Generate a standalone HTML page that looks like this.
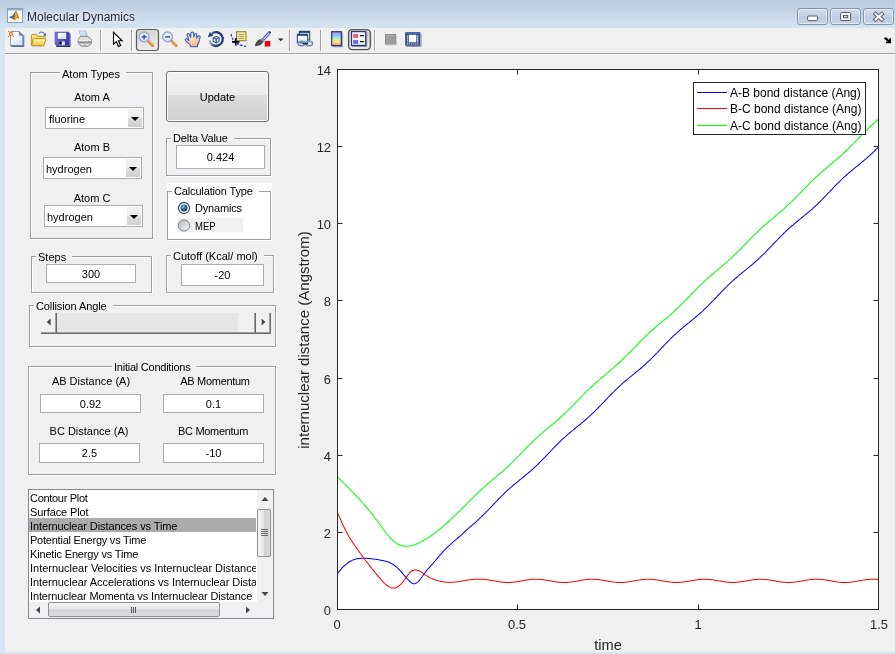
<!DOCTYPE html>
<html>
<head>
<meta charset="utf-8">
<title>Molecular Dynamics</title>
<style>
html,body{margin:0;padding:0;}
body{width:895px;height:654px;overflow:hidden;background:#f0f0f0;position:relative;
 font-family:"Liberation Sans",sans-serif;font-size:11px;color:#000;}
.abs{position:absolute;}
#frame{position:absolute;left:0;top:0;width:895px;height:654px;background:#d9e5f3;}
#titlebar{position:absolute;left:0;top:0;width:895px;height:28px;
 background:linear-gradient(to bottom,#bacbde 0%,#c4d4e6 40%,#d6e4f2 100%);}
#title{position:absolute;left:27px;top:9px;font-size:12px;line-height:16px;color:#26263c;letter-spacing:0;text-shadow:0 0 5px rgba(255,255,255,.9),0 0 8px rgba(255,255,255,.7);}
#client{position:absolute;left:5px;top:28px;width:890px;height:624px;background:#f0f0f0;}
#tbline{position:absolute;left:5px;top:53px;width:890px;height:1px;background:#a0a0a0;}
#tbline2{position:absolute;left:5px;top:54px;width:890px;height:1px;background:#fff;}
.wbtn{position:absolute;top:8px;width:29px;height:15px;border:1px solid #8593ad;border-radius:3px;
 background:linear-gradient(to bottom,#d0dceb 0%,#c6d3e5 48%,#bccae0 52%,#c6d4e7 100%);box-shadow:inset 0 0 0 1px rgba(255,255,255,.5);}
.panel{position:absolute;border:1px solid #a0a0a0;box-shadow:1px 1px 0 #fff, inset 1px 1px 0 #fff;box-sizing:border-box;}
.ptitle{position:absolute;background:#f0f0f0;line-height:13px;height:13px;white-space:nowrap;padding:0 6px 0 2px;}
.lbl{position:absolute;line-height:13px;height:13px;white-space:nowrap;text-align:center;}
.edit{position:absolute;box-sizing:border-box;border:1px solid #abadb3;background:#fff;text-align:center;white-space:nowrap;}
.edit span{position:absolute;left:0;right:0;top:50%;margin-top:-6px;line-height:13px;}
.combo{position:absolute;box-sizing:border-box;border:1px solid #abadb3;background:#fff;height:22px;}
.combo .t{position:absolute;left:2px;top:5px;line-height:13px;}
.combo .b{position:absolute;right:1px;top:1px;bottom:1px;width:14px;background:linear-gradient(to bottom,#f2f2f2 0%,#ebebeb 49%,#dddddd 50%,#cfcfcf 100%);}
.combo .b i{position:absolute;left:3px;top:8px;width:0;height:0;border-left:4px solid transparent;border-right:4px solid transparent;border-top:4px solid #000;}
.li{position:absolute;left:1px;height:14px;line-height:14px;white-space:nowrap;padding-left:0;letter-spacing:-0.13px;}
svg text{font-family:"Liberation Sans",sans-serif;}
</style>
</head>
<body>
<div id="root" style="position:absolute;left:0;top:0;width:895px;height:654px;will-change:transform">
<div id="frame"></div>
<div id="titlebar"></div>
<div id="client"></div>

<!-- title icon -->
<svg class="abs" style="left:7px;top:8px" width="16" height="16" viewBox="0 0 16 16">
 <rect x="0.5" y="0.5" width="15" height="14" fill="#fdfdfd" stroke="#8e9bb0"/>
 <rect x="1" y="1" width="14" height="1.6" fill="#8fb3d9"/>
 <path d="M2 9.5 L6.2 7.2 L8.5 3.2 L9.6 3 L12.5 11.2 L10.4 9.6 L7.6 12.6 L5.6 10.6 Z" fill="#d95a1a"/>
 <path d="M2 9.5 L6.2 7.2 L8.5 3.2 L7.6 8.4 L5.6 10.6 Z" fill="#2f6fb5"/>
 <path d="M8.5 3.2 L9.6 3 L10.6 9.4 L7.6 12.6 L7.6 8.4 Z" fill="#f2a11f"/>
</svg>
<div id="title">Molecular Dynamics</div>

<!-- window buttons -->
<div class="wbtn" style="left:797px"></div>
<div class="wbtn" style="left:830px"></div>
<div class="wbtn" style="left:863px"></div>
<svg class="abs" style="left:797px;top:8px" width="98" height="17" viewBox="797 8 98 17">
 <rect x="807.6" y="16" width="10" height="4.6" rx="1" fill="#fdfdfd" stroke="#4e586e" stroke-width="1"/>
 <rect x="840.6" y="12.5" width="10" height="8" rx="1" fill="#fdfdfd" stroke="#4e586e" stroke-width="1"/>
 <rect x="843.5" y="15.4" width="4.2" height="2.4" fill="#c4d0e2" stroke="#4e586e" stroke-width="1"/>
 <path d="M875.6 14 L881.8 19.4 M881.8 14 L875.6 19.4" stroke="#4e586e" stroke-width="4" stroke-linecap="square" fill="none"/>
 <path d="M875.6 14 L881.8 19.4 M881.8 14 L875.6 19.4" stroke="#fdfdfd" stroke-width="2.2" stroke-linecap="square" fill="none"/>
</svg>

<!-- toolbar -->
<div id="tbline"></div><div id="tbline2"></div>
<svg class="abs" style="left:5px;top:28px" width="890" height="25" viewBox="5 28 890 25" id="toolbar">
 <defs>
  <linearGradient id="gPage" x1="0" y1="0" x2="0.6" y2="1"><stop offset="0" stop-color="#ffffff"/><stop offset="0.5" stop-color="#f4f8fe"/><stop offset="1" stop-color="#d2e2f8"/></linearGradient>
  <linearGradient id="gFold" x1="0" y1="0" x2="0" y2="1"><stop offset="0" stop-color="#fff6b8"/><stop offset="1" stop-color="#f0c848"/></linearGradient>
  <linearGradient id="gFoldB" x1="0" y1="0" x2="0" y2="1"><stop offset="0" stop-color="#fbe88c"/><stop offset="1" stop-color="#e8b830"/></linearGradient>
  <linearGradient id="gBtn" x1="0" y1="0" x2="0" y2="1"><stop offset="0" stop-color="#d4d4d4"/><stop offset="1" stop-color="#ececec"/></linearGradient>
  <linearGradient id="gCb" x1="0" y1="0" x2="0" y2="1"><stop offset="0" stop-color="#a494e6"/><stop offset="0.18" stop-color="#98a8ee"/><stop offset="0.38" stop-color="#8ce0f0"/><stop offset="0.56" stop-color="#d4f09c"/><stop offset="0.72" stop-color="#f8e87c"/><stop offset="1" stop-color="#f8a894"/></linearGradient>
  <linearGradient id="gLens" x1="0" y1="0" x2="1" y2="1"><stop offset="0" stop-color="#ffffff"/><stop offset="1" stop-color="#ccdcf4"/></linearGradient>
  <linearGradient id="gHand" x1="0" y1="0" x2="0.4" y2="1"><stop offset="0" stop-color="#fff8ee"/><stop offset="0.5" stop-color="#fde6cc"/><stop offset="1" stop-color="#f0b880"/></linearGradient>
  <linearGradient id="gFlop" x1="0" y1="0" x2="1" y2="0.3"><stop offset="0" stop-color="#7a78e6"/><stop offset="1" stop-color="#3c38a8"/></linearGradient>
  <linearGradient id="gPaper" x1="0" y1="0" x2="1" y2="1"><stop offset="0" stop-color="#e4f0ff"/><stop offset="1" stop-color="#a8c8f4"/></linearGradient>
  <linearGradient id="gWin" x1="0" y1="0" x2="0" y2="1"><stop offset="0" stop-color="#ffffff"/><stop offset="1" stop-color="#d8e0ee"/></linearGradient>
  <linearGradient id="gRot" x1="0" y1="0" x2="1" y2="0"><stop offset="0" stop-color="#c8d0e0"/><stop offset="0.35" stop-color="#24407c"/><stop offset="1" stop-color="#24407c"/></linearGradient>
</defs>
<!-- new -->
<g transform="translate(8,31)">
 <path d="M3.5 15.5 H15.7 V4.6" fill="none" stroke="#5c6488" stroke-width="1.2"/>
 <path d="M2.5 0.5 H11.3 L15 4.2 V14.6 H2.5 Z" fill="url(#gPage)" stroke="#8ca4dc" stroke-width="1"/>
 <path d="M15 4.2 V14.6 H2.5" fill="none" stroke="#7078b0" stroke-width="1"/>
 <path d="M11.3 0.5 V4.2 H15 Z" fill="#7888c8" stroke="#6070b0" stroke-width="0.7"/>
 <circle cx="2.9" cy="2.9" r="2.1" fill="#e8703c"/>
 <circle cx="2.9" cy="2.9" r="1.05" fill="#f4e060"/>
 <path d="M0.2 0.2 L0.9 0.9 M5.6 0.2 L4.9 0.9 M0.2 5.6 L0.9 4.9 M5.6 5.6 L4.9 4.9" stroke="#e86838" stroke-width="1" stroke-linecap="round"/>
</g>
<!-- open -->
<g transform="translate(30,31)">
 <path d="M9 2.6 C10.2 0.6 13.4 0.6 14.8 3.2" fill="none" stroke="#6080b8" stroke-width="1.2"/>
 <path d="M16.1 1.9 L15.8 5.3 L13.2 4.2 Z" fill="#3458a0"/>
 <path d="M1.4 14 V4.4 Q1.4 3.4 2.4 3.4 H6.2 Q7 3.4 7.4 4.2 L8 5.4 H14 Q15 5.4 15 6.4 V8" fill="url(#gFoldB)" stroke="#c09414" stroke-width="1"/>
 <path d="M1.6 14.6 L3.4 8.4 Q3.7 7.6 4.5 7.6 H15 Q16 7.6 15.7 8.5 L14.2 14 Q14 14.6 13.3 14.6 Z" fill="url(#gFold)" stroke="#c09414" stroke-width="1"/>
 <path d="M2.6 15.6 H14.6" stroke="#a0a8b8" stroke-width="0.8" opacity=".6"/>
</g>
<!-- save -->
<g transform="translate(54,31)">
 <path d="M2.2 15.4 H15.9 V2.2" fill="none" stroke="#2c3468" stroke-width="1.1"/>
 <path d="M1.2 1.2 H15 V14.4 H2.6 L1.2 13 Z" fill="url(#gFlop)" stroke="#4848b8" stroke-width="0.8"/>
 <rect x="3.9" y="1.9" width="8.2" height="6" fill="#f6f8fe"/>
 <path d="M3.9 7.9 L12.1 1.9 V7.9 Z" fill="#dce4f4" opacity=".8"/>
 <rect x="5.2" y="10.4" width="5.6" height="3.8" fill="#e4e8f4"/>
 <rect x="5.2" y="10.4" width="2.6" height="3.2" fill="#101024"/>
 <rect x="13.2" y="2.2" width="0.9" height="1.3" fill="#202060"/>
</g>
<!-- print -->
<g transform="translate(77,31)">
 <path d="M2 0 H8.9 L10.6 5.8 H3.8 Z" fill="url(#gPaper)" stroke="#90a8d0" stroke-width="0.6"/>
 <path d="M1.2 9 L3.2 5.6 H11 L14.6 8.6 V12.4 L11.6 15.2 H4.4 L1.2 12.6 Z" fill="#c6c6c6" stroke="#7a7a7a" stroke-width="0.8"/>
 <path d="M1.6 9 L3.4 6 H10.8 L14.2 8.8 Z" fill="#dedede"/>
 <path d="M1.4 9.4 H14.4" stroke="#f6f6f6" stroke-width="1"/>
 <path d="M1.4 11.3 H14.4" stroke="#8a8a8a" stroke-width="1.2"/>
 <path d="M2.2 12.8 L4.8 14.8 H11.2 L13.8 12.8 Z" fill="#f4f4f4" stroke="#9a9a9a" stroke-width="0.6"/>
 <rect x="11.7" y="9.9" width="1.3" height="1.1" fill="#48b848"/>
 <rect x="7" y="13.6" width="1.6" height="0.9" fill="#7080d0"/>
</g>
<path d="M100.5 30 V51 M131.5 30 V51 M289.5 30 V51 M320.5 30 V51 M374.5 30 V51" stroke="#a4a4a4" stroke-width="1" fill="none"/>
<path d="M101.5 30 V51 M132.5 30 V51 M290.5 30 V51 M321.5 30 V51 M375.5 30 V51" stroke="#fbfbfb" stroke-width="1" fill="none"/>
<!-- pointer -->
<g transform="translate(112,31)">
 <path d="M1.5 1.3 V13.2 L4.3 10.6 L6.5 15.4 L8.6 14.4 L6.5 9.8 L10.2 9.8 Z" fill="#fff" stroke="#000" stroke-width="1.1" stroke-linejoin="miter"/>
</g>
<!-- zoom in (pressed) -->
<rect x="136.5" y="29.5" width="22" height="21" rx="3" fill="url(#gBtn)" stroke="#5c5c5c" stroke-width="1.2"/>
<g transform="translate(138,31)">
 <path d="M10.6 10.6 L14.8 14.8" stroke="#e08a24" stroke-width="2.8" stroke-linecap="round"/>
 <path d="M10.6 9.8 L15.2 14.4" stroke="#f8cc80" stroke-width="0.8"/>
 <circle cx="6.1" cy="5.9" r="4.9" fill="url(#gLens)" stroke="#98a4dc" stroke-width="1.4"/>
 <path d="M3.6 5.9 H8.6 M6.1 3.4 V8.4" stroke="#2030a0" stroke-width="1.2"/>
</g>
<!-- zoom out -->
<g transform="translate(161.5,31)">
 <path d="M10.6 10.6 L14.8 14.8" stroke="#e08a24" stroke-width="2.8" stroke-linecap="round"/>
 <path d="M10.6 9.8 L15.2 14.4" stroke="#f8cc80" stroke-width="0.8"/>
 <circle cx="6.1" cy="5.9" r="4.9" fill="url(#gLens)" stroke="#98a4dc" stroke-width="1.4"/>
 <path d="M3.6 5.9 H8.6" stroke="#2030a0" stroke-width="1.2"/>
</g>
<!-- pan hand -->
<g transform="translate(185,31)">
 <path d="M5.6 15.8 L5 13.6 L0.6 9.6 Q-0.1 8.6 0.7 8 Q1.5 7.5 2.4 8.2 L4 9.6 L2.2 4 Q2 2.8 2.9 2.5 Q3.8 2.3 4.3 3.4 L5.6 6.6 L5.9 2.2 Q6.1 1 7.3 1 Q8.5 1.1 8.6 2.3 L8.8 6.2 L9.6 3.4 Q10 2.3 10.9 2.5 Q11.9 2.8 11.7 4 L11.4 7.2 L13.2 5.2 Q14 4.4 14.7 4.9 Q15.4 5.5 15 6.5 L14.4 9.4 Q13.8 12 12.6 13.6 L12.4 15.8 Z" fill="url(#gHand)" stroke="#3454c4" stroke-width="1.05" stroke-linejoin="round"/>
</g>
<!-- rotate 3d -->
<g transform="translate(207.5,31)">
 <path d="M3.3 3.4 A6.9 6.9 0 1 1 1.6 9.2" fill="none" stroke="url(#gRot)" stroke-width="2.3"/>
 <path d="M0.4 6.3 L2.2 1 L5.9 4.7 Z" fill="#24407c"/>
 <path d="M5.7 6.6 L8.7 5.4 L11.6 6.6 V10.4 L8.7 11.9 L5.7 10.4 Z" fill="#dce6f8" stroke="#24407c" stroke-width="1"/>
 <path d="M5.7 6.6 L8.7 8 L11.6 6.6 M8.7 8 V11.9" fill="none" stroke="#24407c" stroke-width="1"/>
</g>
<!-- data cursor -->
<g transform="translate(230,31)">
 <path d="M1 3 C2 8.5 5 13.5 16 15.5" fill="none" stroke="#1010f0" stroke-width="1.1" stroke-dasharray="2.4 1.4"/>
 <rect x="6.5" y="0.7" width="9.5" height="9" fill="#eee8a8" stroke="#8c8830" stroke-width="1.1"/>
 <path d="M8.5 3.5 H14 M8.5 5.5 H14 M8.5 7.5 H14" stroke="#a8a050" stroke-width="0.9"/>
 <path d="M2 10.8 H9.5 M5.7 7.2 V14.4" stroke="#000" stroke-width="1.7"/>
</g>
<!-- brush -->
<g transform="translate(254.5,31)">
 <path d="M8.2 9 L15 1.6" stroke="#3444c4" stroke-width="3" stroke-linecap="round"/>
 <path d="M8.8 8.4 L14.8 1.9" stroke="#dce4ff" stroke-width="1.2"/>
 <path d="M6.2 8 L9.4 10.6" stroke="#8890a0" stroke-width="2"/>
 <path d="M0.6 14.8 Q1.5 10 5.4 8.4 L8.2 11 Q6.5 14.8 0.6 14.8 Z" fill="#505050" stroke="#303030" stroke-width="0.6"/>
 <rect x="10.3" y="10" width="5.5" height="5.5" fill="#f00010"/>
</g>
<path d="M278 38.5 H283.5 L280.75 41.3 Z" fill="#202020"/>
<!-- link -->
<g transform="translate(296,30)">
 <rect x="3.3" y="1.4" width="10.4" height="8.6" fill="url(#gWin)" stroke="#24407c" stroke-width="1"/>
 <rect x="3" y="0.9" width="11" height="2" fill="#24407c"/>
 <rect x="1.3" y="4.4" width="10.4" height="8.4" fill="url(#gWin)" stroke="#24407c" stroke-width="1"/>
 <rect x="1" y="3.8" width="11" height="2" fill="#24407c"/>
 <ellipse cx="5.6" cy="13.5" rx="3.3" ry="2.3" fill="none" stroke="#5878b0" stroke-width="1.5"/>
 <ellipse cx="13.2" cy="13.5" rx="3.3" ry="2.3" fill="none" stroke="#5878b0" stroke-width="1.5"/>
 <ellipse cx="5.6" cy="13.2" rx="3" ry="2" fill="none" stroke="#c8d8f0" stroke-width="0.5"/>
 <ellipse cx="13.2" cy="13.2" rx="3" ry="2" fill="none" stroke="#c8d8f0" stroke-width="0.5"/>
 <path d="M6.6 13.7 H12.2" stroke="#182c58" stroke-width="1.3"/>
</g>
<!-- colorbar -->
<path d="M332.5 46.6 H342.2 V32.5" fill="none" stroke="#8890a8" stroke-width="1.1"/>
<rect x="331.7" y="31.7" width="9.6" height="13.8" fill="url(#gCb)" stroke="#283878" stroke-width="1.2"/>
<!-- legend pressed -->
<rect x="348.6" y="29.6" width="21.8" height="20" rx="3.5" fill="url(#gBtn)" stroke="#555" stroke-width="1.4"/>
<path d="M352 46.5 H366.7 V32.5" fill="none" stroke="#8890a8" stroke-width="1"/>
<rect x="351.5" y="31.6" width="14.2" height="13.8" fill="#f4f7fd" stroke="#223a7a" stroke-width="1.2"/>
<rect x="353.2" y="34.1" width="5" height="3.7" fill="#e85860"/>
<rect x="353.2" y="40.1" width="5" height="3.7" fill="#6464e8"/>
<path d="M360 35.7 H364 M360 41.7 H364" stroke="#101010" stroke-width="1.3"/>
<!-- hide plot tools -->
<rect x="385.5" y="34.5" width="10" height="9.6" fill="#9c9c9c" stroke="#8c8c8c"/>
<rect x="386" y="35" width="9" height="1.6" fill="#a8a8a8"/>
<path d="M386.6 45 H396.4 V35.6" fill="none" stroke="#c4c4c4" stroke-width="1"/>
<!-- show plot tools -->
<path d="M406.5 46.4 H421 V33.5" fill="none" stroke="#8890a8" stroke-width="1"/>
<rect x="405.2" y="32.2" width="15" height="13.6" fill="#2c4690"/>
<rect x="405.8" y="32.8" width="13.8" height="1.4" fill="#4868b8"/>
<rect x="409" y="34.8" width="7.3" height="7.5" fill="#ffffff"/>
<path d="M407.7 35.4 V42.4 M417.7 35.4 V42.4" stroke="#f4f0e0" stroke-width="1.5" stroke-dasharray="1.3 0.7"/>
<path d="M406.6 44 H419" stroke="#f0e8d0" stroke-width="1.2" stroke-dasharray="1.3 0.7"/>
<!-- dock arrow -->
<path d="M884.3 37.6 H886.6 L889.2 40.2 V38.3 H891 V43.2 H886 V41.5 H887.9 L884.3 38.9 Z" fill="#000"/>

</svg>

<!-- Atom Types panel -->
<div class="panel" style="left:30px;top:72px;width:123px;height:167px"></div>
<div class="ptitle" style="left:60px;top:68px">Atom Types</div>
<div class="lbl" style="left:52px;top:91px;width:80px">Atom A</div>
<div class="combo" style="left:45px;top:107px;width:99px"><span class="t" style="left:3px">fluorine</span><span class="b"><i></i></span></div>
<div class="lbl" style="left:52px;top:141px;width:80px">Atom B</div>
<div class="combo" style="left:43px;top:157px;width:99px"><span class="t">hydrogen</span><span class="b"><i></i></span></div>
<div class="lbl" style="left:52px;top:192px;width:80px">Atom C</div>
<div class="combo" style="left:44px;top:205px;width:99px"><span class="t">hydrogen</span><span class="b"><i></i></span></div>

<!-- Update button -->
<div class="abs" style="left:166px;top:71px;width:103px;height:51px;box-sizing:border-box;border:1px solid #707070;border-radius:3px;
 background:linear-gradient(to bottom,#f2f2f2 0%,#ebebeb 46%,#dddddd 47%,#cfcfcf 100%);box-shadow:inset 0 0 0 1px #fcfcfc;text-align:center;line-height:50px">Update</div>

<!-- Delta Value -->
<div class="panel" style="left:166px;top:138px;width:105px;height:38px"></div>
<div class="ptitle" style="left:171px;top:132px;letter-spacing:-0.11px">Delta Value</div>
<div class="edit" style="left:176px;top:145px;width:89px;height:24px"><span>0.424</span></div>

<!-- Calculation Type -->
<div class="abs" style="left:167px;top:183px;width:105px;height:58px;background:#fff"></div>
<div class="panel" style="left:167px;top:191px;width:104px;height:49px"></div>
<div class="ptitle" style="left:172px;top:185px;background:#fff;letter-spacing:-0.15px">Calculation Type</div>
<div class="abs" style="left:177px;top:218px;width:66px;height:14px;background:#f0f0f0"></div>
<svg class="abs" style="left:177px;top:201px" width="14" height="32" viewBox="0 0 14 32">
 <defs>
  <radialGradient id="rg1" cx="0.4" cy="0.35" r="0.7"><stop offset="0" stop-color="#8adcf8"/><stop offset="0.35" stop-color="#2488cc"/><stop offset="0.8" stop-color="#123c70"/><stop offset="1" stop-color="#101c30"/></radialGradient>
  <linearGradient id="rg2" x1="0" y1="0" x2="1" y2="1"><stop offset="0" stop-color="#b4b9bf"/><stop offset="1" stop-color="#f6f6f6"/></linearGradient>
 </defs>
 <circle cx="7" cy="7" r="5.6" fill="url(#rg2)" stroke="#3c444e" stroke-width="1.1"/>
 <circle cx="7" cy="7" r="4.6" fill="#fff" opacity=".75"/><circle cx="7" cy="7" r="3.4" fill="url(#rg1)"/>
 <circle cx="7" cy="24.5" r="5.6" fill="url(#rg2)" stroke="#7c838c" stroke-width="1"/>
</svg>
<div class="lbl" style="left:195px;top:202px;text-align:left;letter-spacing:-0.19px">Dynamics</div>
<div class="lbl" style="left:195px;top:220px;text-align:left;transform:scaleX(0.86);transform-origin:0 0">MEP</div>

<!-- Steps -->
<div class="panel" style="left:31px;top:256px;width:121px;height:37px"></div>
<div class="ptitle" style="left:36px;top:251px">Steps</div>
<div class="edit" style="left:46px;top:264px;width:90px;height:19px"><span>300</span></div>

<!-- Cutoff -->
<div class="panel" style="left:166px;top:255px;width:108px;height:38px"></div>
<div class="ptitle" style="left:171px;top:250px">Cutoff (Kcal/ mol)</div>
<div class="edit" style="left:181px;top:264px;width:83px;height:22px"><span>-20</span></div>

<!-- Collision Angle -->
<div class="panel" style="left:29px;top:305px;width:247px;height:42px"></div>
<div class="ptitle" style="left:34px;top:300px;letter-spacing:-0.11px">Collision Angle</div>
<div class="abs" id="slider" style="left:41px;top:313px;width:230px;height:21px;background:#e6e6e6"></div>
<div class="abs" style="left:41px;top:313px;width:15px;height:19px;background:#f0f0f0"></div>
<div class="abs" style="left:238px;top:313px;width:16px;height:19px;background:#f0f0f0"></div>
<div class="abs" style="left:256px;top:313px;width:14px;height:19px;background:#f0f0f0"></div>
<svg class="abs" style="left:41px;top:313px" width="230" height="21" viewBox="0 0 230 21">
 <path d="M0 20.5 H230" stroke="#696969" stroke-width="1"/>
 <path d="M0 19.5 H229" stroke="#a0a0a0" stroke-width="1"/>
 <path d="M15.5 0 V20 M214.5 0 V20 M229.5 0 V21" stroke="#696969" stroke-width="1"/>
 <path d="M14.5 0 V19 M213.5 0 V19 M228.5 0 V19" stroke="#a0a0a0" stroke-width="1"/>
 <path d="M5.8 9 L9.6 5.4 L9.6 12.6 Z" fill="#484848"/><path d="M224.4 9 L220.6 5.4 L220.6 12.6 Z" fill="#484848"/>
</svg>

<!-- Initial Conditions -->
<div class="panel" style="left:28px;top:366px;width:248px;height:109px"></div>
<div class="ptitle" style="left:112px;top:361px;letter-spacing:-0.24px">Initial Conditions</div>
<div class="lbl" style="left:41px;top:375px;width:100px">AB Distance (A)</div>
<div class="lbl" style="left:165px;top:375px;width:100px;letter-spacing:-0.3px">AB Momentum</div>
<div class="edit" style="left:40px;top:394px;width:101px;height:19px"><span>0.92</span></div>
<div class="edit" style="left:163px;top:394px;width:101px;height:19px"><span>0.1</span></div>
<div class="lbl" style="left:39px;top:425px;width:100px">BC Distance (A)</div>
<div class="lbl" style="left:163px;top:425px;width:100px;letter-spacing:-0.3px">BC Momentum</div>
<div class="edit" style="left:39px;top:443px;width:101px;height:20px"><span>2.5</span></div>
<div class="edit" style="left:163px;top:443px;width:101px;height:20px"><span>-10</span></div>

<!-- Listbox -->
<div class="abs" id="listbox" style="left:28px;top:489px;width:246px;height:130px;box-sizing:border-box;border:1px solid #828790;background:#fff;overflow:hidden">
 <div class="abs" style="left:0px;top:28px;width:227px;height:14px;background:#ababab"></div>
 <div class="li" style="top:1px;letter-spacing:-0.3px">Contour Plot</div>
 <div class="li" style="top:15px">Surface Plot</div>
 <div class="li" style="top:29px;letter-spacing:-0.1px">Internuclear Distances vs Time</div>
 <div class="li" style="top:43px;letter-spacing:-0.23px">Potential Energy vs Time</div>
 <div class="li" style="top:57px;letter-spacing:-0.17px">Kinetic Energy vs Time</div>
 <div class="li" style="top:71px;width:226px;overflow:hidden;letter-spacing:-0.02px">Internuclear Velocities vs Internuclear Distance</div>
 <div class="li" style="top:85px;width:226px;overflow:hidden;letter-spacing:-0.06px">Internuclear Accelerations vs Internuclear Distance</div>
 <div class="li" style="top:99px;width:226px;overflow:hidden">Internuclear Momenta vs Internuclear Distance</div>
 <!-- v scrollbar -->
 <div class="abs" style="left:228px;top:0;width:17px;height:112px;background:#f0f0f0"></div>
 <div class="abs" style="left:228px;top:19px;width:14px;height:48px;box-sizing:border-box;border:1px solid #8f8f8f;border-radius:2px;background:linear-gradient(to right,#f5f5f5 0%,#e8e8e8 45%,#d2d2d2 55%,#dadada 100%)"></div>
 <svg class="abs" style="left:228px;top:0" width="17" height="112" viewBox="0 0 17 112">
  <path d="M4.5 11 L8 7 L11.5 11 Z" fill="#444"/><path d="M4.5 102 L8 106 L11.5 102 Z" fill="#444"/>
  <path d="M4 39.5 H11 M4 41.5 H11 M4 43.5 H11 M4 45.5 H11" stroke="#666" stroke-width="1"/>
 </svg>
 <!-- h scrollbar -->
 <div class="abs" style="left:0;top:112px;width:245px;height:17px;background:#f0f0f0"></div>
 <div class="abs" style="left:19px;top:112px;width:172px;height:15px;box-sizing:border-box;border:1px solid #8f8f8f;border-radius:2px;background:linear-gradient(to bottom,#f3f3f3 0%,#e6e6e6 45%,#d4d4d4 55%,#dcdcdc 100%)"></div>
 <svg class="abs" style="left:0;top:112px" width="245" height="17" viewBox="0 0 245 17">
  <path d="M11 4.5 L7 8 L11 11.5 Z" fill="#444"/><path d="M217 4.5 L221 8 L217 11.5 Z" fill="#444"/>
  <path d="M102.5 5 V11 M104.5 5 V11 M106.5 5 V11" stroke="#555" stroke-width="1"/>
 </svg>
</div>

<!-- Plot -->
<svg class="abs" style="left:285px;top:55px" width="610" height="596" viewBox="285 55 610 596" id="plot">
 <rect x="337.5" y="69.5" width="541" height="540" fill="#fff" stroke="none"/>
 <g fill="none" stroke-width="1.03" stroke-linejoin="round">
  <path d="M337.5 573.5 L338.6 572.2 L339.7 570.9 L340.8 569.6 L341.8 568.4 L342.9 567.2 L344.0 566.1 L345.1 565.1 L346.2 564.1 L347.3 563.3 L348.3 562.5 L349.4 561.8 L350.5 561.2 L351.6 560.6 L352.7 560.1 L353.8 559.7 L354.8 559.4 L355.9 559.1 L357.0 558.8 L358.1 558.6 L359.2 558.5 L360.3 558.4 L361.4 558.3 L362.4 558.2 L363.5 558.2 L364.6 558.2 L365.7 558.2 L366.8 558.3 L367.9 558.4 L368.9 558.5 L370.0 558.6 L371.1 558.7 L372.2 558.9 L373.3 559.0 L374.4 559.1 L375.4 559.3 L376.5 559.4 L377.6 559.6 L378.7 559.8 L379.8 560.0 L380.9 560.2 L382.0 560.4 L383.0 560.6 L384.1 560.9 L385.2 561.1 L386.3 561.4 L387.4 561.7 L388.5 562.1 L389.5 562.5 L390.6 563.0 L391.7 563.6 L392.8 564.3 L393.9 565.0 L395.0 565.8 L396.0 566.7 L397.1 567.6 L398.2 568.6 L399.3 569.7 L400.4 570.9 L401.5 572.1 L402.6 573.3 L403.6 574.6 L404.7 575.9 L405.8 577.1 L406.9 578.4 L408.0 579.6 L409.1 580.7 L410.1 581.8 L411.2 582.7 L412.3 583.3 L413.4 583.7 L414.5 583.8 L415.6 583.5 L416.6 582.9 L417.7 582.1 L418.8 581.0 L419.9 579.7 L421.0 578.3 L422.1 576.8 L423.1 575.3 L424.2 573.8 L425.3 572.4 L426.4 571.0 L427.5 569.7 L428.6 568.4 L429.7 567.2 L430.7 565.9 L431.8 564.7 L432.9 563.5 L434.0 562.2 L435.1 561.0 L436.2 559.7 L437.2 558.4 L438.3 557.1 L439.4 555.8 L440.5 554.6 L441.6 553.3 L442.7 552.1 L443.7 550.9 L444.8 549.8 L445.9 548.7 L447.0 547.6 L448.1 546.6 L449.2 545.6 L450.3 544.6 L451.3 543.6 L452.4 542.6 L453.5 541.7 L454.6 540.7 L455.7 539.8 L456.8 538.9 L457.8 538.0 L458.9 537.0 L460.0 536.1 L461.1 535.1 L462.2 534.2 L463.3 533.2 L464.3 532.1 L465.4 531.1 L466.5 530.1 L467.6 529.1 L468.7 528.1 L469.8 527.2 L470.9 526.3 L471.9 525.3 L473.0 524.4 L474.1 523.5 L475.2 522.6 L476.3 521.6 L477.4 520.6 L478.4 519.6 L479.5 518.6 L480.6 517.6 L481.7 516.5 L482.8 515.5 L483.9 514.4 L484.9 513.3 L486.0 512.2 L487.1 511.1 L488.2 510.0 L489.3 508.8 L490.4 507.7 L491.5 506.6 L492.5 505.4 L493.6 504.3 L494.7 503.1 L495.8 502.0 L496.9 500.9 L498.0 499.7 L499.0 498.6 L500.1 497.5 L501.2 496.4 L502.3 495.4 L503.4 494.3 L504.5 493.2 L505.5 492.2 L506.6 491.2 L507.7 490.2 L508.8 489.2 L509.9 488.2 L511.0 487.3 L512.1 486.3 L513.1 485.4 L514.2 484.5 L515.3 483.6 L516.4 482.7 L517.5 481.8 L518.6 480.9 L519.6 480.0 L520.7 479.2 L521.8 478.3 L522.9 477.4 L524.0 476.5 L525.1 475.6 L526.1 474.7 L527.2 473.8 L528.3 472.9 L529.4 472.0 L530.5 471.1 L531.6 470.1 L532.7 469.1 L533.7 468.1 L534.8 467.1 L535.9 466.1 L537.0 465.1 L538.1 464.0 L539.2 463.0 L540.2 461.9 L541.3 460.8 L542.4 459.7 L543.5 458.6 L544.6 457.5 L545.7 456.3 L546.7 455.2 L547.8 454.1 L548.9 452.9 L550.0 451.8 L551.1 450.6 L552.2 449.5 L553.2 448.4 L554.3 447.3 L555.4 446.1 L556.5 445.0 L557.6 444.0 L558.7 442.9 L559.8 441.8 L560.8 440.8 L561.9 439.7 L563.0 438.7 L564.1 437.7 L565.2 436.8 L566.3 435.8 L567.3 434.8 L568.4 433.9 L569.5 433.0 L570.6 432.1 L571.7 431.2 L572.8 430.3 L573.8 429.4 L574.9 428.5 L576.0 427.6 L577.1 426.7 L578.2 425.9 L579.3 425.0 L580.4 424.1 L581.4 423.2 L582.5 422.3 L583.6 421.4 L584.7 420.5 L585.8 419.5 L586.9 418.6 L587.9 417.6 L589.0 416.7 L590.1 415.7 L591.2 414.7 L592.3 413.6 L593.4 412.6 L594.4 411.6 L595.5 410.5 L596.6 409.4 L597.7 408.3 L598.8 407.2 L599.9 406.1 L601.0 405.0 L602.0 403.8 L603.1 402.7 L604.2 401.6 L605.3 400.4 L606.4 399.3 L607.5 398.1 L608.5 397.0 L609.6 395.9 L610.7 394.8 L611.8 393.7 L612.9 392.6 L614.0 391.5 L615.0 390.4 L616.1 389.3 L617.2 388.3 L618.3 387.3 L619.4 386.3 L620.5 385.3 L621.6 384.3 L622.6 383.3 L623.7 382.4 L624.8 381.5 L625.9 380.5 L627.0 379.6 L628.1 378.7 L629.1 377.8 L630.2 376.9 L631.3 376.1 L632.4 375.2 L633.5 374.3 L634.6 373.4 L635.6 372.5 L636.7 371.7 L637.8 370.8 L638.9 369.9 L640.0 369.0 L641.1 368.0 L642.2 367.1 L643.2 366.2 L644.3 365.2 L645.4 364.2 L646.5 363.2 L647.6 362.2 L648.7 361.2 L649.7 360.1 L650.8 359.1 L651.9 358.0 L653.0 356.9 L654.1 355.8 L655.2 354.7 L656.2 353.6 L657.3 352.5 L658.4 351.3 L659.5 350.2 L660.6 349.1 L661.7 347.9 L662.8 346.8 L663.8 345.6 L664.9 344.5 L666.0 343.4 L667.1 342.3 L668.2 341.2 L669.3 340.1 L670.3 339.0 L671.4 337.9 L672.5 336.9 L673.6 335.8 L674.7 334.8 L675.8 333.8 L676.8 332.8 L677.9 331.8 L679.0 330.9 L680.1 329.9 L681.2 329.0 L682.3 328.1 L683.3 327.2 L684.4 326.3 L685.5 325.4 L686.6 324.5 L687.7 323.6 L688.8 322.8 L689.9 321.9 L690.9 321.0 L692.0 320.1 L693.1 319.2 L694.2 318.3 L695.3 317.4 L696.4 316.5 L697.4 315.6 L698.5 314.7 L699.6 313.7 L700.7 312.7 L701.8 311.8 L702.9 310.8 L703.9 309.7 L705.0 308.7 L706.1 307.7 L707.2 306.6 L708.3 305.5 L709.4 304.4 L710.5 303.3 L711.5 302.2 L712.6 301.1 L713.7 300.0 L714.8 298.8 L715.9 297.7 L717.0 296.6 L718.0 295.4 L719.1 294.3 L720.2 293.2 L721.3 292.0 L722.4 290.9 L723.5 289.8 L724.5 288.7 L725.6 287.6 L726.7 286.5 L727.8 285.4 L728.9 284.4 L730.0 283.4 L731.1 282.3 L732.1 281.3 L733.2 280.4 L734.3 279.4 L735.4 278.4 L736.5 277.5 L737.6 276.6 L738.6 275.7 L739.7 274.7 L740.8 273.8 L741.9 273.0 L743.0 272.1 L744.1 271.2 L745.1 270.3 L746.2 269.4 L747.3 268.6 L748.4 267.7 L749.5 266.8 L750.6 265.9 L751.7 265.0 L752.7 264.1 L753.8 263.1 L754.9 262.2 L756.0 261.2 L757.1 260.3 L758.2 259.3 L759.2 258.3 L760.3 257.3 L761.4 256.2 L762.5 255.2 L763.6 254.1 L764.7 253.0 L765.7 252.0 L766.8 250.8 L767.9 249.7 L769.0 248.6 L770.1 247.5 L771.2 246.3 L772.3 245.2 L773.3 244.1 L774.4 242.9 L775.5 241.8 L776.6 240.7 L777.7 239.5 L778.8 238.4 L779.8 237.3 L780.9 236.2 L782.0 235.1 L783.1 234.0 L784.2 233.0 L785.3 231.9 L786.3 230.9 L787.4 229.9 L788.5 228.9 L789.6 227.9 L790.7 226.9 L791.8 226.0 L792.9 225.1 L793.9 224.1 L795.0 223.2 L796.1 222.3 L797.2 221.4 L798.3 220.5 L799.4 219.6 L800.4 218.8 L801.5 217.9 L802.6 217.0 L803.7 216.1 L804.8 215.2 L805.9 214.4 L806.9 213.5 L808.0 212.6 L809.1 211.6 L810.2 210.7 L811.3 209.8 L812.4 208.8 L813.4 207.8 L814.5 206.8 L815.6 205.8 L816.7 204.8 L817.8 203.8 L818.9 202.7 L820.0 201.6 L821.0 200.6 L822.1 199.5 L823.2 198.4 L824.3 197.2 L825.4 196.1 L826.5 195.0 L827.5 193.9 L828.6 192.7 L829.7 191.6 L830.8 190.4 L831.9 189.3 L833.0 188.2 L834.0 187.0 L835.1 185.9 L836.2 184.8 L837.3 183.7 L838.4 182.6 L839.5 181.6 L840.6 180.5 L841.6 179.5 L842.7 178.4 L843.8 177.4 L844.9 176.4 L846.0 175.5 L847.1 174.5 L848.1 173.5 L849.2 172.6 L850.3 171.7 L851.4 170.8 L852.5 169.9 L853.6 169.0 L854.6 168.1 L855.7 167.2 L856.8 166.3 L857.9 165.5 L859.0 164.6 L860.1 163.7 L861.2 162.8 L862.2 161.9 L863.3 161.0 L864.4 160.1 L865.5 159.2 L866.6 158.3 L867.7 157.3 L868.7 156.3 L869.8 155.4 L870.9 154.4 L872.0 153.4 L873.1 152.3 L874.2 151.3 L875.2 150.2 L876.3 149.2 L877.4 148.1 L878.5 147.0" stroke="#0000ff"/>
  <path d="M337.5 512.6 L338.6 515.1 L339.7 517.6 L340.8 520.1 L341.8 522.5 L342.9 524.9 L344.0 527.1 L345.1 529.3 L346.2 531.4 L347.3 533.5 L348.3 535.4 L349.4 537.3 L350.5 539.1 L351.6 540.9 L352.7 542.6 L353.8 544.1 L354.8 545.7 L355.9 547.2 L357.0 548.7 L358.1 550.2 L359.2 551.7 L360.3 553.3 L361.4 554.8 L362.4 556.3 L363.5 557.8 L364.6 559.2 L365.7 560.7 L366.8 562.1 L367.9 563.5 L368.9 564.9 L370.0 566.2 L371.1 567.6 L372.2 569.0 L373.3 570.3 L374.4 571.6 L375.4 573.0 L376.5 574.3 L377.6 575.6 L378.7 576.9 L379.8 578.1 L380.9 579.4 L382.0 580.6 L383.0 581.8 L384.1 582.9 L385.2 584.0 L386.3 584.9 L387.4 585.8 L388.5 586.5 L389.5 587.1 L390.6 587.6 L391.7 587.9 L392.8 588.1 L393.9 588.1 L395.0 588.0 L396.0 587.7 L397.1 587.2 L398.2 586.5 L399.3 585.7 L400.4 584.7 L401.5 583.6 L402.6 582.4 L403.6 581.0 L404.7 579.5 L405.8 577.9 L406.9 576.4 L408.0 574.9 L409.1 573.5 L410.1 572.4 L411.2 571.4 L412.3 570.7 L413.4 570.3 L414.5 570.0 L415.6 570.0 L416.6 570.1 L417.7 570.4 L418.8 570.8 L419.9 571.3 L421.0 571.9 L422.1 572.6 L423.1 573.4 L424.2 574.1 L425.3 574.9 L426.4 575.6 L427.5 576.3 L428.6 577.0 L429.7 577.6 L430.7 578.1 L431.8 578.6 L432.9 579.0 L434.0 579.5 L435.1 579.8 L436.2 580.2 L437.2 580.5 L438.3 580.8 L439.4 581.1 L440.5 581.3 L441.6 581.5 L442.7 581.7 L443.7 581.9 L444.8 582.0 L445.9 582.2 L447.0 582.2 L448.1 582.3 L449.2 582.3 L450.3 582.3 L451.3 582.3 L452.4 582.3 L453.5 582.2 L454.6 582.1 L455.7 582.0 L456.8 581.9 L457.8 581.7 L458.9 581.6 L460.0 581.4 L461.1 581.2 L462.2 581.0 L463.3 580.8 L464.3 580.7 L465.4 580.5 L466.5 580.3 L467.6 580.1 L468.7 579.9 L469.8 579.8 L470.9 579.6 L471.9 579.5 L473.0 579.4 L474.1 579.3 L475.2 579.3 L476.3 579.2 L477.4 579.2 L478.4 579.2 L479.5 579.2 L480.6 579.2 L481.7 579.3 L482.8 579.3 L483.9 579.4 L484.9 579.5 L486.0 579.6 L487.1 579.7 L488.2 579.8 L489.3 580.0 L490.4 580.2 L491.5 580.4 L492.5 580.6 L493.6 580.8 L494.7 580.9 L495.8 581.1 L496.9 581.3 L498.0 581.5 L499.0 581.7 L500.1 581.9 L501.2 582.0 L502.3 582.1 L503.4 582.2 L504.5 582.3 L505.5 582.4 L506.6 582.4 L507.7 582.5 L508.8 582.5 L509.9 582.4 L511.0 582.4 L512.1 582.3 L513.1 582.2 L514.2 582.1 L515.3 582.0 L516.4 581.8 L517.5 581.7 L518.6 581.5 L519.6 581.3 L520.7 581.1 L521.8 580.9 L522.9 580.7 L524.0 580.5 L525.1 580.3 L526.1 580.1 L527.2 580.0 L528.3 579.8 L529.4 579.7 L530.5 579.5 L531.6 579.4 L532.7 579.3 L533.7 579.3 L534.8 579.2 L535.9 579.2 L537.0 579.2 L538.1 579.3 L539.2 579.3 L540.2 579.4 L541.3 579.5 L542.4 579.6 L543.5 579.7 L544.6 579.9 L545.7 580.0 L546.7 580.2 L547.8 580.4 L548.9 580.6 L550.0 580.8 L551.1 581.0 L552.2 581.2 L553.2 581.4 L554.3 581.6 L555.4 581.7 L556.5 581.9 L557.6 582.0 L558.7 582.2 L559.8 582.3 L560.8 582.3 L561.9 582.4 L563.0 582.4 L564.1 582.5 L565.2 582.5 L566.3 582.4 L567.3 582.4 L568.4 582.3 L569.5 582.2 L570.6 582.1 L571.7 581.9 L572.8 581.8 L573.8 581.6 L574.9 581.4 L576.0 581.3 L577.1 581.1 L578.2 580.9 L579.3 580.7 L580.4 580.5 L581.4 580.3 L582.5 580.1 L583.6 579.9 L584.7 579.8 L585.8 579.6 L586.9 579.5 L587.9 579.4 L589.0 579.3 L590.1 579.3 L591.2 579.2 L592.3 579.2 L593.4 579.2 L594.4 579.3 L595.5 579.3 L596.6 579.4 L597.7 579.5 L598.8 579.6 L599.9 579.8 L601.0 579.9 L602.0 580.1 L603.1 580.3 L604.2 580.5 L605.3 580.7 L606.4 580.8 L607.5 581.0 L608.5 581.2 L609.6 581.4 L610.7 581.6 L611.8 581.8 L612.9 581.9 L614.0 582.1 L615.0 582.2 L616.1 582.3 L617.2 582.4 L618.3 582.4 L619.4 582.5 L620.5 582.5 L621.6 582.4 L622.6 582.4 L623.7 582.4 L624.8 582.3 L625.9 582.2 L627.0 582.0 L628.1 581.9 L629.1 581.7 L630.2 581.6 L631.3 581.4 L632.4 581.2 L633.5 581.0 L634.6 580.8 L635.6 580.6 L636.7 580.4 L637.8 580.2 L638.9 580.1 L640.0 579.9 L641.1 579.7 L642.2 579.6 L643.2 579.5 L644.3 579.4 L645.4 579.3 L646.5 579.3 L647.6 579.2 L648.7 579.2 L649.7 579.2 L650.8 579.3 L651.9 579.3 L653.0 579.4 L654.1 579.5 L655.2 579.7 L656.2 579.8 L657.3 580.0 L658.4 580.1 L659.5 580.3 L660.6 580.5 L661.7 580.7 L662.8 580.9 L663.8 581.1 L664.9 581.3 L666.0 581.5 L667.1 581.6 L668.2 581.8 L669.3 582.0 L670.3 582.1 L671.4 582.2 L672.5 582.3 L673.6 582.4 L674.7 582.4 L675.8 582.5 L676.8 582.5 L677.9 582.4 L679.0 582.4 L680.1 582.3 L681.2 582.2 L682.3 582.1 L683.3 582.0 L684.4 581.9 L685.5 581.7 L686.6 581.5 L687.7 581.3 L688.8 581.2 L689.9 581.0 L690.9 580.8 L692.0 580.6 L693.1 580.4 L694.2 580.2 L695.3 580.0 L696.4 579.9 L697.4 579.7 L698.5 579.6 L699.6 579.5 L700.7 579.4 L701.8 579.3 L702.9 579.3 L703.9 579.2 L705.0 579.2 L706.1 579.2 L707.2 579.3 L708.3 579.4 L709.4 579.5 L710.5 579.6 L711.5 579.7 L712.6 579.8 L713.7 580.0 L714.8 580.2 L715.9 580.4 L717.0 580.6 L718.0 580.7 L719.1 580.9 L720.2 581.1 L721.3 581.3 L722.4 581.5 L723.5 581.7 L724.5 581.8 L725.6 582.0 L726.7 582.1 L727.8 582.2 L728.9 582.3 L730.0 582.4 L731.1 582.4 L732.1 582.5 L733.2 582.5 L734.3 582.4 L735.4 582.4 L736.5 582.3 L737.6 582.2 L738.6 582.1 L739.7 582.0 L740.8 581.8 L741.9 581.7 L743.0 581.5 L744.1 581.3 L745.1 581.1 L746.2 580.9 L747.3 580.7 L748.4 580.5 L749.5 580.3 L750.6 580.2 L751.7 580.0 L752.7 579.8 L753.8 579.7 L754.9 579.5 L756.0 579.4 L757.1 579.4 L758.2 579.3 L759.2 579.2 L760.3 579.2 L761.4 579.2 L762.5 579.3 L763.6 579.3 L764.7 579.4 L765.7 579.5 L766.8 579.6 L767.9 579.7 L769.0 579.9 L770.1 580.0 L771.2 580.2 L772.3 580.4 L773.3 580.6 L774.4 580.8 L775.5 581.0 L776.6 581.2 L777.7 581.4 L778.8 581.6 L779.8 581.7 L780.9 581.9 L782.0 582.0 L783.1 582.2 L784.2 582.3 L785.3 582.3 L786.3 582.4 L787.4 582.4 L788.5 582.5 L789.6 582.5 L790.7 582.4 L791.8 582.4 L792.9 582.3 L793.9 582.2 L795.0 582.1 L796.1 581.9 L797.2 581.8 L798.3 581.6 L799.4 581.4 L800.4 581.3 L801.5 581.1 L802.6 580.9 L803.7 580.7 L804.8 580.5 L805.9 580.3 L806.9 580.1 L808.0 579.9 L809.1 579.8 L810.2 579.6 L811.3 579.5 L812.4 579.4 L813.4 579.3 L814.5 579.3 L815.6 579.2 L816.7 579.2 L817.8 579.2 L818.9 579.3 L820.0 579.3 L821.0 579.4 L822.1 579.5 L823.2 579.6 L824.3 579.8 L825.4 579.9 L826.5 580.1 L827.5 580.3 L828.6 580.5 L829.7 580.6 L830.8 580.8 L831.9 581.0 L833.0 581.2 L834.0 581.4 L835.1 581.6 L836.2 581.8 L837.3 581.9 L838.4 582.1 L839.5 582.2 L840.6 582.3 L841.6 582.4 L842.7 582.4 L843.8 582.5 L844.9 582.5 L846.0 582.4 L847.1 582.4 L848.1 582.4 L849.2 582.3 L850.3 582.2 L851.4 582.0 L852.5 581.9 L853.6 581.7 L854.6 581.6 L855.7 581.4 L856.8 581.2 L857.9 581.0 L859.0 580.8 L860.1 580.6 L861.2 580.4 L862.2 580.2 L863.3 580.1 L864.4 579.9 L865.5 579.7 L866.6 579.6 L867.7 579.5 L868.7 579.4 L869.8 579.3 L870.9 579.3 L872.0 579.2 L873.1 579.2 L874.2 579.2 L875.2 579.3 L876.3 579.3 L877.4 579.4 L878.5 579.5" stroke="#ff0000"/>
  <path d="M337.5 477.1 L338.6 478.2 L339.7 479.2 L340.8 480.3 L341.8 481.3 L342.9 482.4 L344.0 483.4 L345.1 484.5 L346.2 485.6 L347.3 486.6 L348.3 487.7 L349.4 488.8 L350.5 489.9 L351.6 491.0 L352.7 492.1 L353.8 493.2 L354.8 494.3 L355.9 495.4 L357.0 496.6 L358.1 497.7 L359.2 498.9 L360.3 500.1 L361.4 501.3 L362.4 502.5 L363.5 503.8 L364.6 505.0 L365.7 506.3 L366.8 507.6 L367.9 509.0 L368.9 510.3 L370.0 511.7 L371.1 513.0 L372.2 514.4 L373.3 515.8 L374.4 517.2 L375.4 518.6 L376.5 520.0 L377.6 521.4 L378.7 522.8 L379.8 524.3 L380.9 525.7 L382.0 527.2 L383.0 528.7 L384.1 530.2 L385.2 531.7 L386.3 533.2 L387.4 534.6 L388.5 535.9 L389.5 537.2 L390.6 538.3 L391.7 539.4 L392.8 540.4 L393.9 541.4 L395.0 542.2 L396.0 543.0 L397.1 543.7 L398.2 544.3 L399.3 544.8 L400.4 545.3 L401.5 545.6 L402.6 545.9 L403.6 546.1 L404.7 546.2 L405.8 546.3 L406.9 546.3 L408.0 546.3 L409.1 546.1 L410.1 546.0 L411.2 545.7 L412.3 545.5 L413.4 545.1 L414.5 544.8 L415.6 544.4 L416.6 543.9 L417.7 543.5 L418.8 543.0 L419.9 542.4 L421.0 541.9 L422.1 541.3 L423.1 540.7 L424.2 540.1 L425.3 539.5 L426.4 538.8 L427.5 538.1 L428.6 537.5 L429.7 536.7 L430.7 536.0 L431.8 535.3 L432.9 534.5 L434.0 533.7 L435.1 532.9 L436.2 532.1 L437.2 531.3 L438.3 530.4 L439.4 529.5 L440.5 528.6 L441.6 527.7 L442.7 526.8 L443.7 525.9 L444.8 524.9 L445.9 523.9 L447.0 523.0 L448.1 522.0 L449.2 521.0 L450.3 520.0 L451.3 518.9 L452.4 517.9 L453.5 516.9 L454.6 515.8 L455.7 514.8 L456.8 513.7 L457.8 512.7 L458.9 511.6 L460.0 510.6 L461.1 509.5 L462.2 508.4 L463.3 507.3 L464.3 506.3 L465.4 505.2 L466.5 504.1 L467.6 503.0 L468.7 501.9 L469.8 500.8 L470.9 499.7 L471.9 498.6 L473.0 497.5 L474.1 496.4 L475.2 495.4 L476.3 494.3 L477.4 493.3 L478.4 492.2 L479.5 491.2 L480.6 490.2 L481.7 489.2 L482.8 488.2 L483.9 487.3 L484.9 486.3 L486.0 485.4 L487.1 484.4 L488.2 483.5 L489.3 482.6 L490.4 481.7 L491.5 480.8 L492.5 479.9 L493.6 479.0 L494.7 478.1 L495.8 477.2 L496.9 476.2 L498.0 475.3 L499.0 474.4 L500.1 473.5 L501.2 472.5 L502.3 471.6 L503.4 470.6 L504.5 469.7 L505.5 468.7 L506.6 467.7 L507.7 466.7 L508.8 465.7 L509.9 464.6 L511.0 463.6 L512.1 462.5 L513.1 461.5 L514.2 460.4 L515.3 459.3 L516.4 458.2 L517.5 457.1 L518.6 456.0 L519.6 454.9 L520.7 453.7 L521.8 452.6 L522.9 451.5 L524.0 450.4 L525.1 449.3 L526.1 448.2 L527.2 447.1 L528.3 446.0 L529.4 444.9 L530.5 443.8 L531.6 442.7 L532.7 441.7 L533.7 440.6 L534.8 439.6 L535.9 438.6 L537.0 437.6 L538.1 436.6 L539.2 435.6 L540.2 434.7 L541.3 433.7 L542.4 432.8 L543.5 431.8 L544.6 430.9 L545.7 430.0 L546.7 429.1 L547.8 428.2 L548.9 427.3 L550.0 426.4 L551.1 425.5 L552.2 424.6 L553.2 423.7 L554.3 422.7 L555.4 421.8 L556.5 420.9 L557.6 420.0 L558.7 419.0 L559.8 418.0 L560.8 417.1 L561.9 416.1 L563.0 415.1 L564.1 414.1 L565.2 413.1 L566.3 412.0 L567.3 411.0 L568.4 409.9 L569.5 408.8 L570.6 407.8 L571.7 406.7 L572.8 405.6 L573.8 404.5 L574.9 403.3 L576.0 402.2 L577.1 401.1 L578.2 400.0 L579.3 398.9 L580.4 397.7 L581.4 396.6 L582.5 395.5 L583.6 394.4 L584.7 393.3 L585.8 392.3 L586.9 391.2 L587.9 390.1 L589.0 389.1 L590.1 388.0 L591.2 387.0 L592.3 386.0 L593.4 385.0 L594.4 384.0 L595.5 383.0 L596.6 382.1 L597.7 381.1 L598.8 380.2 L599.9 379.3 L601.0 378.3 L602.0 377.4 L603.1 376.5 L604.2 375.6 L605.3 374.7 L606.4 373.8 L607.5 372.9 L608.5 372.0 L609.6 371.1 L610.7 370.2 L611.8 369.2 L612.9 368.3 L614.0 367.4 L615.0 366.4 L616.1 365.4 L617.2 364.5 L618.3 363.5 L619.4 362.5 L620.5 361.5 L621.6 360.4 L622.6 359.4 L623.7 358.3 L624.8 357.3 L625.9 356.2 L627.0 355.1 L628.1 354.0 L629.1 352.9 L630.2 351.8 L631.3 350.7 L632.4 349.6 L633.5 348.5 L634.6 347.3 L635.6 346.2 L636.7 345.1 L637.8 344.0 L638.9 342.9 L640.0 341.8 L641.1 340.7 L642.2 339.6 L643.2 338.6 L644.3 337.5 L645.4 336.4 L646.5 335.4 L647.6 334.4 L648.7 333.4 L649.7 332.4 L650.8 331.4 L651.9 330.4 L653.0 329.5 L654.1 328.5 L655.2 327.6 L656.2 326.7 L657.3 325.7 L658.4 324.8 L659.5 323.9 L660.6 323.0 L661.7 322.1 L662.8 321.2 L663.8 320.3 L664.9 319.4 L666.0 318.5 L667.1 317.6 L668.2 316.6 L669.3 315.7 L670.3 314.8 L671.4 313.8 L672.5 312.8 L673.6 311.9 L674.7 310.9 L675.8 309.9 L676.8 308.9 L677.9 307.8 L679.0 306.8 L680.1 305.7 L681.2 304.7 L682.3 303.6 L683.3 302.5 L684.4 301.4 L685.5 300.3 L686.6 299.2 L687.7 298.1 L688.8 296.9 L689.9 295.8 L690.9 294.7 L692.0 293.6 L693.1 292.5 L694.2 291.4 L695.3 290.3 L696.4 289.2 L697.4 288.1 L698.5 287.0 L699.6 285.9 L700.7 284.9 L701.8 283.8 L702.9 282.8 L703.9 281.8 L705.0 280.8 L706.1 279.8 L707.2 278.8 L708.3 277.8 L709.4 276.9 L710.5 275.9 L711.5 275.0 L712.6 274.1 L713.7 273.2 L714.8 272.2 L715.9 271.3 L717.0 270.4 L718.0 269.5 L719.1 268.6 L720.2 267.7 L721.3 266.8 L722.4 265.9 L723.5 265.0 L724.5 264.1 L725.6 263.1 L726.7 262.2 L727.8 261.2 L728.9 260.2 L730.0 259.3 L731.1 258.3 L732.1 257.3 L733.2 256.2 L734.3 255.2 L735.4 254.2 L736.5 253.1 L737.6 252.0 L738.6 251.0 L739.7 249.9 L740.8 248.8 L741.9 247.7 L743.0 246.5 L744.1 245.4 L745.1 244.3 L746.2 243.2 L747.3 242.1 L748.4 241.0 L749.5 239.8 L750.6 238.7 L751.7 237.6 L752.7 236.5 L753.8 235.4 L754.9 234.4 L756.0 233.3 L757.1 232.3 L758.2 231.2 L759.2 230.2 L760.3 229.2 L761.4 228.2 L762.5 227.2 L763.6 226.2 L764.7 225.2 L765.7 224.3 L766.8 223.3 L767.9 222.4 L769.0 221.5 L770.1 220.6 L771.2 219.7 L772.3 218.8 L773.3 217.9 L774.4 216.9 L775.5 216.0 L776.6 215.1 L777.7 214.2 L778.8 213.3 L779.8 212.4 L780.9 211.5 L782.0 210.5 L783.1 209.6 L784.2 208.6 L785.3 207.6 L786.3 206.7 L787.4 205.7 L788.5 204.6 L789.6 203.6 L790.7 202.6 L791.8 201.5 L792.9 200.5 L793.9 199.4 L795.0 198.3 L796.1 197.2 L797.2 196.1 L798.3 195.0 L799.4 193.9 L800.4 192.8 L801.5 191.7 L802.6 190.6 L803.7 189.4 L804.8 188.3 L805.9 187.2 L806.9 186.1 L808.0 185.0 L809.1 183.9 L810.2 182.8 L811.3 181.7 L812.4 180.7 L813.4 179.6 L814.5 178.6 L815.6 177.6 L816.7 176.6 L817.8 175.6 L818.9 174.6 L820.0 173.6 L821.0 172.6 L822.1 171.7 L823.2 170.8 L824.3 169.8 L825.4 168.9 L826.5 168.0 L827.5 167.1 L828.6 166.2 L829.7 165.3 L830.8 164.4 L831.9 163.5 L833.0 162.6 L834.0 161.6 L835.1 160.7 L836.2 159.8 L837.3 158.9 L838.4 157.9 L839.5 157.0 L840.6 156.0 L841.6 155.0 L842.7 154.1 L843.8 153.0 L844.9 152.0 L846.0 151.0 L847.1 150.0 L848.1 148.9 L849.2 147.9 L850.3 146.8 L851.4 145.7 L852.5 144.6 L853.6 143.5 L854.6 142.4 L855.7 141.3 L856.8 140.2 L857.9 139.0 L859.0 137.9 L860.1 136.8 L861.2 135.7 L862.2 134.6 L863.3 133.5 L864.4 132.4 L865.5 131.3 L866.6 130.2 L867.7 129.1 L868.7 128.1 L869.8 127.0 L870.9 126.0 L872.0 125.0 L873.1 124.0 L874.2 123.0 L875.2 122.0 L876.3 121.0 L877.4 120.1 L878.5 119.1" stroke="#00ff00"/>
 </g>
 <rect x="337.5" y="69.5" width="541" height="540" fill="none" stroke="#262626" stroke-width="1"/>
 <g stroke="#262626" stroke-width="1" id="ticks">
  <path d="M338.0 532.5 h4.5 M878.0 532.5 h-4.5"/>
  <path d="M338.0 455.5 h4.5 M878.0 455.5 h-4.5"/>
  <path d="M338.0 378.5 h4.5 M878.0 378.5 h-4.5"/>
  <path d="M338.0 300.5 h4.5 M878.0 300.5 h-4.5"/>
  <path d="M338.0 223.5 h4.5 M878.0 223.5 h-4.5"/>
  <path d="M338.0 146.5 h4.5 M878.0 146.5 h-4.5"/>
  <path d="M517.5 609.0 v-4.5 M517.5 70.0 v4.5"/>
  <path d="M698.5 609.0 v-4.5 M698.5 70.0 v4.5"/>
 </g>
 <g font-size="12.9px" fill="#262626" id="ticklabels">
  <text x="331" y="615.1" text-anchor="end">0</text>
  <text x="331" y="538.1" text-anchor="end">2</text>
  <text x="331" y="461.1" text-anchor="end">4</text>
  <text x="331" y="384.1" text-anchor="end">6</text>
  <text x="331" y="306.1" text-anchor="end">8</text>
  <text x="331" y="229.1" text-anchor="end">10</text>
  <text x="331" y="152.1" text-anchor="end">12</text>
  <text x="331" y="75.1" text-anchor="end">14</text>
  <text x="337.0" y="629" text-anchor="middle">0</text>
  <text x="517.0" y="629" text-anchor="middle">0.5</text>
  <text x="698.0" y="629" text-anchor="middle">1</text>
  <text x="879.0" y="629" text-anchor="middle">1.5</text>
 </g>
 <text x="608" y="650" font-size="14.67px" fill="#262626" text-anchor="middle">time</text>
 <text transform="translate(308.5,340) rotate(-90)" font-size="15.05px" fill="#262626" text-anchor="middle">internuclear distance (Angstrom)</text>
 <!-- legend -->
 <rect x="693.5" y="82.5" width="172" height="52" fill="#fff" stroke="#262626"/>
 <g stroke-width="1">
  <path d="M697 92.5 H727" stroke="#0000ff"/>
  <path d="M697 108.5 H727" stroke="#ff0000"/>
  <path d="M697 125.5 H727" stroke="#00ff00"/>
 </g>
 <g font-size="12px" fill="#000">
  <text x="730" y="97">A-B bond distance (Ang)</text>
  <text x="730" y="113">B-C bond distance (Ang)</text>
  <text x="730" y="130">A-C bond distance (Ang)</text>
 </g>
</svg>
</div>
</body>
</html>
